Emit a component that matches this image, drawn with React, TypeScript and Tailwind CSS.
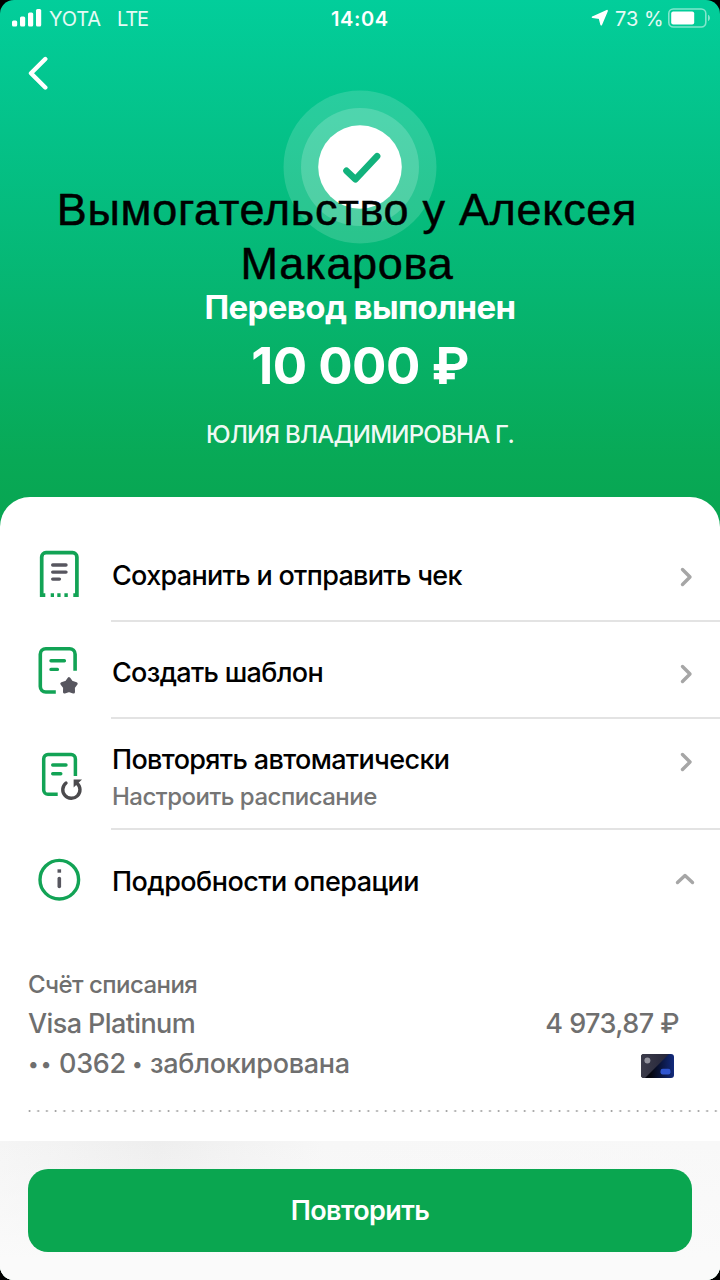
import React from "react";

const ChevronRight: React.FC<{ className?: string }> = ({ className }) => (
  <svg width="14" height="20" viewBox="0 0 14 20" fill="none" className={className}>
    <path
      d="M2.5 2.5L10 10L2.5 17.5"
      stroke="#a6a6a6"
      strokeWidth="3.4"
      strokeLinecap="round"
      strokeLinejoin="round"
    />
  </svg>
);

const ReceiptIcon = () => (
  <svg width="60" height="60" viewBox="0 0 60 60" fill="none">
    <path
      d="M15.3 50.2H11.7V12a4.3 4.3 0 0 1 4.3-4.3H42.6a4.3 4.3 0 0 1 4.3 4.3V50.2H43.3"
      stroke="#12a355"
      strokeWidth="3.7"
    />
    <path d="M20.7 50.2H24M27.3 50.2H30.6M34.4 50.2H37.8" stroke="#12a355" strokeWidth="3.7" />
    <path
      d="M22.7 20H36M22.7 27.1H36M22.7 34.1H29.4"
      stroke="#57565f"
      strokeWidth="3.4"
      strokeLinecap="round"
    />
  </svg>
);

const TemplateIcon = () => (
  <svg width="60" height="60" viewBox="0 0 60 60" fill="none">
    <path
      d="M45.1 28.8V12.2a5.5 5.5 0 0 0-5.5-5.5H15.8a5.5 5.5 0 0 0-5.5 5.5V44.5a5.5 5.5 0 0 0 5.5 5.5H25.8"
      stroke="#12a355"
      strokeWidth="3.6"
    />
    <path d="M21 18.7H34.4M21 27.4H27.4" stroke="#12a355" strokeWidth="3.4" strokeLinecap="round" />
    <path
      d="M39 36.6L41.7 40.3L46.2 41.6L43.4 45.4L43.5 50L39 48.6L34.5 50L34.6 45.4L31.8 41.6L36.3 40.3Z"
      fill="#57565f"
      stroke="#57565f"
      strokeWidth="3"
      strokeLinejoin="round"
    />
  </svg>
);

const RepeatIcon = () => (
  <svg width="60" height="60" viewBox="0 0 60 60" fill="none">
    <path
      d="M45.4 30V12.9a4.3 4.3 0 0 0-4.3-4.3H18a4.3 4.3 0 0 0-4.3 4.3V44a4.3 4.3 0 0 0 4.3 4.3H27.7"
      stroke="#12a355"
      strokeWidth="3.5"
    />
    <path d="M22.7 19H36M22.7 27.7H30.8" stroke="#12a355" strokeWidth="3.4" strokeLinecap="round" />
    <path
      d="M36 37A8.6 8.6 0 1 0 47.2 37.4"
      stroke="#4b4a4d"
      strokeWidth="3.4"
      strokeLinecap="round"
    />
    <path d="M43.6 33.6H52L43.6 41.6Z" fill="#4b4a4d" />
  </svg>
);

const InfoIcon = () => (
  <svg width="60" height="60" viewBox="0 0 60 60" fill="none">
    <circle cx="29.3" cy="28.7" r="19.3" stroke="#12a355" strokeWidth="3.4" />
    <path d="M29.3 18.3V21.7" stroke="#57565f" strokeWidth="3.6" />
    <path d="M29.3 27.5V35.5" stroke="#57565f" strokeWidth="3.6" strokeLinecap="round" />
  </svg>
);

const StatusBar = () => (
  <div className="flex h-9 items-center text-[20px] leading-9 text-white/90">
    <svg width="30" height="18" viewBox="0 0 30 18" className="ml-3">
      <rect x="0" y="11.5" width="5.2" height="6" rx="1.5" fill="white" />
      <rect x="8" y="7.5" width="5.2" height="10" rx="1.5" fill="white" />
      <rect x="16" y="3.5" width="5.2" height="14" rx="1.5" fill="white" />
      <rect x="24" y="0" width="5.2" height="17.5" rx="1.5" fill="white" />
    </svg>
    <span className="mt-px ml-[7px] w-[68px] tracking-[-0.2px]">YOTA</span>
    <span className="mt-px w-[214px] tracking-[-1.2px]">LTE</span>
    <span className="mt-px w-[258px] font-semibold tracking-[0.6px] text-white">14:04</span>
    <svg width="18" height="18" viewBox="0 0 18 18" className="ml-0.5">
      <path
        d="M16 1.8L10.2 15.6L8.6 9.2L1.6 8.2Z"
        fill="white"
        stroke="white"
        strokeWidth="1.8"
        strokeLinejoin="round"
      />
    </svg>
    <span className="mt-px ml-[6px] w-[53px] whitespace-nowrap">73 %</span>
    <svg width="44" height="20" viewBox="0 0 44 20" fill="none">
      <rect x="0.8" y="1" width="37" height="18" rx="4.5" stroke="white" strokeOpacity="0.5" strokeWidth="1.6" />
      <rect x="3.2" y="3.6" width="23" height="12.8" rx="2" fill="white" />
      <path d="M40 6.8C42.6 8 42.6 12 40 13.2Z" fill="white" fillOpacity="0.5" />
    </svg>
  </div>
);

interface ActionRowProps {
  icon: React.ReactNode;
  title: string;
  className: string;
}

const ActionRow: React.FC<ActionRowProps> = ({ icon, title, className }) => (
  <div className={`flex items-center pl-[30px] ${className}`}>
    {icon}
    <span className="mt-0.5 ml-[22px] flex-1 text-[27px] leading-9 font-medium tracking-[-0.68px] text-black">
      {title}
    </span>
    <ChevronRight className="mt-1 mr-[26px]" />
  </div>
);

const Divider = () => <div className="ml-[111px] h-0.5 bg-[#e3e3e3]" />;

const App: React.FC = () => {
  return (
    <div className="h-[1280px] w-[720px] bg-black font-['Inter','Liberation_Sans',sans-serif]">
      <div className="relative flex h-full flex-col overflow-hidden rounded-[14px] bg-[linear-gradient(180deg,#02ce9b_0px,#04c289_130px,#06b570_300px,#08a956_460px,#08a551_530px)]">
        <header className="flex h-[497px] shrink-0 flex-col">
          <StatusBar />
          <div className="h-[54px] pt-5 pl-7">
            <svg width="22" height="34" viewBox="0 0 22 34" fill="none">
              <path
                d="M17.3 3L3 17.3L17.3 31.5"
                stroke="white"
                strokeWidth="4.4"
                strokeLinecap="round"
                strokeLinejoin="round"
              />
            </svg>
          </div>
          <svg width="154" height="154" viewBox="0 0 154 154" fill="none" className="mx-auto shrink-0">
            <circle cx="77" cy="77" r="76.5" fill="white" fillOpacity="0.15" />
            <circle cx="77" cy="77" r="59" fill="white" fillOpacity="0.18" />
            <circle cx="77" cy="77" r="41.8" fill="white" />
            <path
              d="M63 80.8L72 89.3L93.6 66.2"
              transform="translate(0.5 0)"
              stroke="#12b27c"
              strokeWidth="6.6"
              strokeLinecap="round"
              strokeLinejoin="round"
            />
          </svg>
          <h1 className="mt-[42px] text-center text-[33px] leading-[42px] font-bold tracking-[-0.6px] text-white">
            Перевод выполнен
          </h1>
          <p className="mt-2 text-center text-[51px] leading-[60px] font-bold tracking-[-0.5px] text-white">
            10 000 ₽
          </p>
          <p className="mt-[23px] text-center text-[24px] leading-8 font-[450] tracking-[-0.75px] text-white/95">
            ЮЛИЯ ВЛАДИМИРОВНА Г.
          </p>
        </header>

        <main className="h-[644px] shrink-0 rounded-t-[30px] bg-white pt-[33px]">
          <ActionRow icon={<ReceiptIcon />} title="Сохранить и отправить чек" className="h-[90px]" />
          <Divider />
          <ActionRow icon={<TemplateIcon />} title="Создать шаблон" className="h-[95px] pt-[5px]" />
          <Divider />
          <div className="flex h-[109px] items-start pt-[21px] pl-[30px]">
            <div className="mt-[6px]">
              <RepeatIcon />
            </div>
            <div className="ml-[22px] flex-1">
              <div className="text-[27px] leading-[39px] font-medium tracking-[-0.65px] text-black">
                Повторять автоматически
              </div>
              <div className="text-[24px] leading-9 font-[450] tracking-[-0.5px] text-[#757575]">
                Настроить расписание
              </div>
            </div>
            <ChevronRight className="mt-3 mr-[26px]" />
          </div>
          <Divider />
          <div className="flex h-[102px] items-center pl-[30px]">
            <InfoIcon />
            <span className="mt-0.5 ml-[22px] flex-1 text-[27px] leading-9 font-medium tracking-[-0.52px] text-black">
              Подробности операции
            </span>
            <svg width="20" height="14" viewBox="0 0 20 14" fill="none" className="mr-[25px] mb-[5px]">
              <path
                d="M2.5 10.5L10 3.5L17.5 10.5"
                stroke="#a6a6a6"
                strokeWidth="3.4"
                strokeLinecap="round"
                strokeLinejoin="round"
              />
            </svg>
          </div>

          <div className="pt-[37px] pl-7 text-[27px] font-[450] text-[#6f6f6f]">
            <div className="text-[24px] leading-8 tracking-[-0.55px]">Счёт списания</div>
            <div className="mt-[3px] flex justify-between pr-[41px] leading-10">
              <span className="tracking-[-0.6px]">Visa Platinum</span>
              <span className="tracking-[-0.55px]">4 973,87 ₽</span>
            </div>
            <div className="flex items-center justify-between pr-[46px] leading-10">
              <span className="flex items-center tracking-[-0.3px]">
                <span className="w-[31px] text-[20px] tracking-[2px]">••</span>
                <span className="w-[73px]">0362</span>
                <span className="w-[18px] text-[20px]">•</span>
                <span>заблокирована</span>
              </span>
              <svg width="33" height="24" viewBox="0 0 33 24" className="mt-1">
                <defs>
                  <linearGradient id="cardBase" x1="0" y1="0" x2="1" y2="0">
                    <stop offset="0.3" stopColor="#05060f" />
                    <stop offset="1" stopColor="#122a7c" />
                  </linearGradient>
                  <linearGradient id="cardShine" x1="0" y1="0" x2="1" y2="0">
                    <stop offset="0" stopColor="#3b3b49" />
                    <stop offset="1" stopColor="#25253a" />
                  </linearGradient>
                </defs>
                <rect width="33" height="24" rx="3" fill="url(#cardBase)" />
                <path d="M3 0H28L4 24H3a3 3 0 0 1-3-3V3a3 3 0 0 1 3-3Z" fill="url(#cardShine)" />
                <circle cx="6.4" cy="6.6" r="3" fill="#92929c" />
                <rect x="19.5" y="14.8" width="10" height="5.6" rx="2.2" fill="#2f55cf" />
              </svg>
            </div>
            <div className="mt-[26px] h-0.5 bg-[radial-gradient(circle_at_1.5px_1px,#a3a3a3_0.7px,transparent_1.3px)] bg-[length:8.7px_2px] bg-repeat-x" />
          </div>
        </main>

        <footer className="flex-1 bg-[linear-gradient(180deg,transparent_0%,#fafafa_85%),linear-gradient(90deg,#f5f5f5_0%,#eeeeee_22%,#f7f7f7_45%,#f8f8f8_100%)] bg-[#fafafa] px-7 pt-7">
          <button className="h-[83px] w-full rounded-[20px] bg-[#0aa650] pt-0.5 text-[27px] font-semibold tracking-[-0.6px] text-white">
            Повторить
          </button>
        </footer>

        {/* caption laid over the header */}
        <p className="absolute top-[183px] left-0 w-[694px] text-center font-['Liberation_Sans',sans-serif] text-[45px] leading-[54px] tracking-[0.7px] text-black [-webkit-text-stroke:0.5px_black]">
          Вымогательство у Алексея
          <br />
          Макарова
        </p>
      </div>
    </div>
  );
};

export default App;
